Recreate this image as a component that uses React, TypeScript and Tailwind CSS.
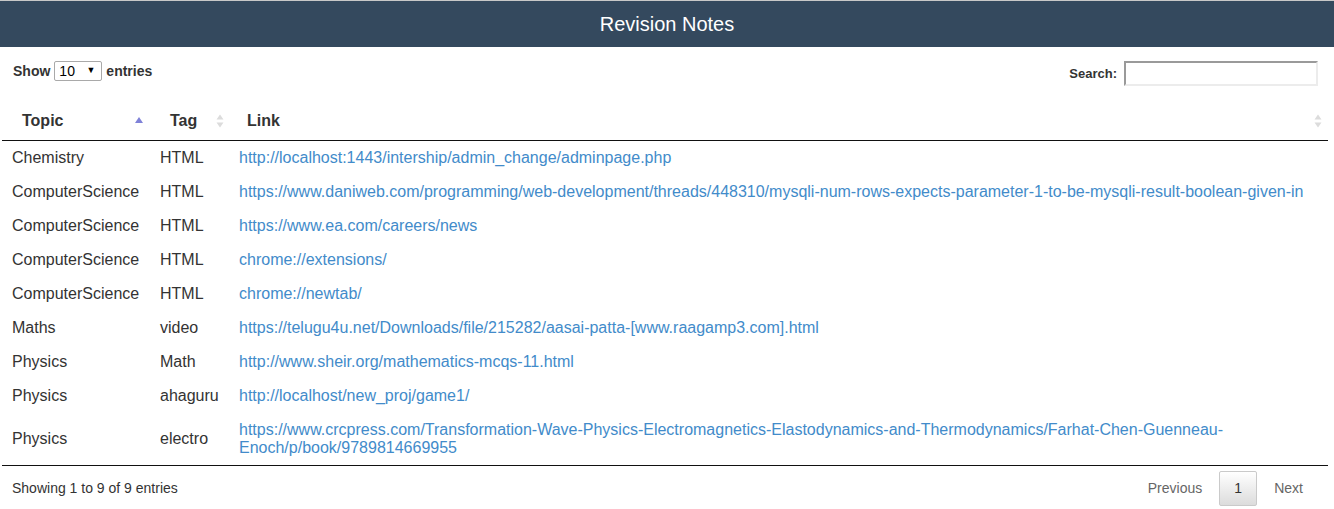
import React from 'react';

type Row = { topic: string; tag: string; link: string };

const rows: Row[] = [
  { topic: 'Chemistry', tag: 'HTML', link: 'http://localhost:1443/intership/admin_change/adminpage.php' },
  {
    topic: 'ComputerScience',
    tag: 'HTML',
    link: 'https://www.daniweb.com/programming/web-development/threads/448310/mysqli-num-rows-expects-parameter-1-to-be-mysqli-result-boolean-given-in',
  },
  { topic: 'ComputerScience', tag: 'HTML', link: 'https://www.ea.com/careers/news' },
  { topic: 'ComputerScience', tag: 'HTML', link: 'chrome://extensions/' },
  { topic: 'ComputerScience', tag: 'HTML', link: 'chrome://newtab/' },
  { topic: 'Maths', tag: 'video', link: 'https://telugu4u.net/Downloads/file/215282/aasai-patta-[www.raagamp3.com].html' },
  { topic: 'Physics', tag: 'Math', link: 'http://www.sheir.org/mathematics-mcqs-11.html' },
  { topic: 'Physics', tag: 'ahaguru', link: 'http://localhost/new_proj/game1/' },
  {
    topic: 'Physics',
    tag: 'electro',
    link: 'https://www.crcpress.com/Transformation-Wave-Physics-Electromagnetics-Elastodynamics-and-Thermodynamics/Farhat-Chen-Guenneau-Enoch/p/book/9789814669955',
  },
];

function SortIcon({ mode }: { mode: 'asc' | 'both' }) {
  if (mode === 'asc') {
    return (
      <svg width="10" height="14" viewBox="0 0 10 14" className="shrink-0">
        <path d="M1 9 L5 3 L9 9 Z" fill="#7f82d8" />
      </svg>
    );
  }
  return (
    <svg width="10" height="18" viewBox="0 0 10 18" className="shrink-0">
      <path d="M1.5 7.5 L5 2.5 L8.5 7.5 Z" fill="#dcdcdc" />
      <path d="M1.5 10.5 L5 15.5 L8.5 10.5 Z" fill="#dcdcdc" />
    </svg>
  );
}

export default function App() {
  return (
    <div className="min-h-[509px] bg-white text-[#333] [font-family:'Liberation_Sans',Arial,sans-serif]">
      <div className="border-t border-[#c8c8c8] bg-[#34495e] h-[47px] flex items-center justify-center">
        <h1 className="text-white text-[20px] leading-none">Revision Notes</h1>
      </div>

      <div className="px-[2px]">
        <div className="flex items-start justify-between px-[11px] pt-[14px] h-[55px] text-[14px] font-bold text-[#333]">
          <div className="flex items-center gap-[4px] h-[20px]">
            <span>Show</span>
            <div className="relative w-[48px] h-[20px] border border-[#a9a9a9] rounded-[2px] flex items-center pl-[4px] font-normal text-[14px] text-black">
              10
              <span className="absolute right-[6px] top-[2px] text-[9px]">▼</span>
            </div>
            <span>entries</span>
          </div>
          <div className="flex items-center gap-[7px] mr-[3px] text-[13px]">
            <span>Search:</span>
            <input
              type="text"
              className="w-[194px] h-[25px] border-2 border-t-[#9a9a9a] border-l-[#9a9a9a] border-b-[#ececec] border-r-[#ececec] outline-none"
            />
          </div>
        </div>

        <table className="w-[1326px] border-collapse text-[16px] leading-[18px]">
          <thead>
            <tr className="border-b border-[#111]">
              <th className="w-[148px] text-left font-bold py-[10px] pl-[20px] pr-[6px]">
                <div className="flex items-center justify-between">
                  <span>Topic</span>
                  <SortIcon mode="asc" />
                </div>
              </th>
              <th className="w-[79px] text-left font-bold py-[10px] pl-[20px] pr-[4px]">
                <div className="flex items-center justify-between">
                  <span>Tag</span>
                  <SortIcon mode="both" />
                </div>
              </th>
              <th className="text-left font-bold py-[10px] pl-[18px] pr-[5px]">
                <div className="flex items-center justify-between">
                  <span>Link</span>
                  <SortIcon mode="both" />
                </div>
              </th>
            </tr>
          </thead>
          <tbody>
            {rows.map((r, i) => (
              <tr key={i} className={i === rows.length - 1 ? 'border-b border-[#111]' : ''}>
                <td className="py-[8px] pl-[10px] align-middle">{r.topic}</td>
                <td className="py-[8px] pl-[10px] align-middle">{r.tag}</td>
                <td className="py-[8px] pl-[10px] pr-[20px] align-middle">
                  <a href="#" className="text-[#428bca] break-words">
                    {r.link}
                  </a>
                </td>
              </tr>
            ))}
          </tbody>
        </table>

        <div className="flex items-center justify-between pl-[10px] pr-[29px] pt-[5px] text-[14px]">
          <span>Showing 1 to 9 of 9 entries</span>
          <div className="flex items-center text-[#666]">
            <span className="px-[14px]">Previous</span>
            <span className="w-[38px] h-[35px] flex items-center justify-center border border-[#cacaca] rounded-[2px] bg-gradient-to-b from-white to-[#dcdcdc] text-[#333] mx-[3px]">
              1
            </span>
            <span className="pl-[14px]">Next</span>
          </div>
        </div>
      </div>
    </div>
  );
}
